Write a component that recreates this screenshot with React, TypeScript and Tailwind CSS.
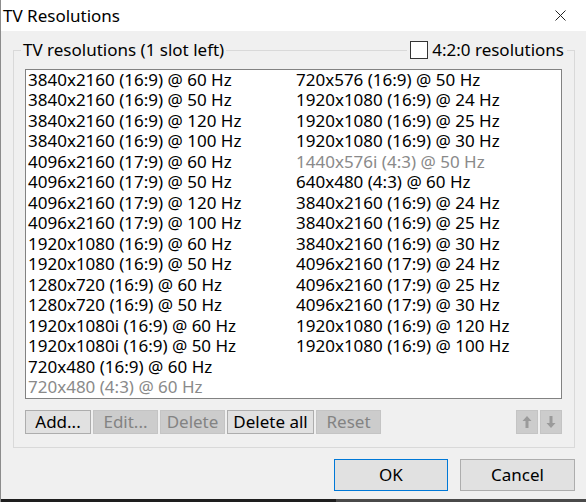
import React from "react";

const left = [
  "3840x2160 (16:9) @ 60 Hz",
  "3840x2160 (16:9) @ 50 Hz",
  "3840x2160 (16:9) @ 120 Hz",
  "3840x2160 (16:9) @ 100 Hz",
  "4096x2160 (17:9) @ 60 Hz",
  "4096x2160 (17:9) @ 50 Hz",
  "4096x2160 (17:9) @ 120 Hz",
  "4096x2160 (17:9) @ 100 Hz",
  "1920x1080 (16:9) @ 60 Hz",
  "1920x1080 (16:9) @ 50 Hz",
  "1280x720 (16:9) @ 60 Hz",
  "1280x720 (16:9) @ 50 Hz",
  "1920x1080i (16:9) @ 60 Hz",
  "1920x1080i (16:9) @ 50 Hz",
  "720x480 (16:9) @ 60 Hz",
  "720x480 (4:3) @ 60 Hz",
];

const right = [
  "720x576 (16:9) @ 50 Hz",
  "1920x1080 (16:9) @ 24 Hz",
  "1920x1080 (16:9) @ 25 Hz",
  "1920x1080 (16:9) @ 30 Hz",
  "1440x576i (4:3) @ 50 Hz",
  "640x480 (4:3) @ 60 Hz",
  "3840x2160 (16:9) @ 24 Hz",
  "3840x2160 (16:9) @ 25 Hz",
  "3840x2160 (16:9) @ 30 Hz",
  "4096x2160 (17:9) @ 24 Hz",
  "4096x2160 (17:9) @ 25 Hz",
  "4096x2160 (17:9) @ 30 Hz",
  "1920x1080 (16:9) @ 120 Hz",
  "1920x1080 (16:9) @ 100 Hz",
];

// greyed-out entries
const disabled = ["1440x576i (4:3) @ 50 Hz", "720x480 (4:3) @ 60 Hz"];

function Item({ text }: { text: string }) {
  return (
    <div
      className={`h-[20.47px] leading-[20.47px] whitespace-nowrap ${
        disabled.includes(text) ? "text-[#8a8a8a]" : "text-black"
      }`}
    >
      {text}
    </div>
  );
}

function Btn({ label, w, enabled }: { label: string; w: string; enabled?: boolean }) {
  return (
    <div
      className={`${w} h-[24px] flex items-center justify-center border ${
        enabled
          ? "bg-[#e1e1e1] border-[#adadad] text-black"
          : "bg-[#cccccc] border-[#c4c4c4] text-[#838383]"
      }`}
    >
      {label}
    </div>
  );
}

function Arrow({ up }: { up?: boolean }) {
  return (
    <div className="w-[22px] h-[24px] bg-[#cccccc] border border-[#c4c4c4] flex items-center justify-center">
      <svg width="10" height="14" viewBox="0 0 10 14" className={up ? "" : "rotate-180"}>
        <path d="M5 1 L9.5 6 H6.5 V13 H3.5 V6 H0.5 Z" fill="#9a9a9a" />
      </svg>
    </div>
  );
}

export default function App() {
  return (
    <div
      className="w-[586px] h-[502px] bg-[#f0f0f0] flex flex-col border-l border-[#8c8c8c] overflow-hidden text-[17px]"
      style={{ fontFamily: '"Noto Sans", "Open Sans", sans-serif' }}
    >
      {/* Title bar */}
      <div className="h-[31px] bg-white flex items-center justify-between pl-[2px] pr-[20px]">
        <span className="text-black">TV Resolutions</span>
        <svg width="11" height="11" viewBox="0 0 11 11">
          <path d="M0.5 0.5 L10.5 10.5 M10.5 0.5 L0.5 10.5" stroke="#222" strokeWidth="1" />
        </svg>
      </div>

      {/* Group box */}
      <div className="ml-[12px] mt-[19px] w-[562px] h-[398px] border border-[#d9d9d9] flex flex-col">
        <div className="-mt-[12px] h-[22px] flex items-center justify-between pl-[7px] pr-[7px]">
          <span className="bg-[#f0f0f0] px-[2px] leading-[22px]">TV resolutions (1 slot left)</span>
          <span className="bg-[#f0f0f0] flex items-center gap-[4px] pl-[3px] pr-[3px] leading-[22px]">
            <span className="w-[18px] h-[18px] bg-white border border-[#333]" />
            4:2:0 resolutions
          </span>
        </div>

        {/* List box */}
        <div className="ml-[11px] mt-[8px] w-[537px] h-[330px] bg-white border border-[#828282] flex pl-[2px]">
          <div className="w-[268px]">
            {left.map((t) => (
              <Item key={t} text={t} />
            ))}
          </div>
          <div>
            {right.map((t) => (
              <Item key={t} text={t} />
            ))}
          </div>
        </div>

        {/* Buttons */}
        <div className="ml-[11px] mt-[11px] w-[537px] flex items-center">
          <div className="flex gap-[2px]">
            <Btn label="Add..." w="w-[66px]" enabled />
            <Btn label="Edit..." w="w-[65px]" />
            <Btn label="Delete" w="w-[65px]" />
            <Btn label="Delete all" w="w-[87px]" enabled />
            <Btn label="Reset" w="w-[65px]" />
          </div>
          <div className="ml-auto flex gap-[2px]">
            <Arrow up />
            <Arrow />
          </div>
        </div>
      </div>

      {/* Dialog buttons */}
      <div className="mt-[11px] w-[574px] flex justify-end gap-[12px]">
        <div className="w-[114px] h-[32px] bg-[#e1e1e1] border border-[#0078d7] flex items-center justify-center">
          OK
        </div>
        <div className="w-[115px] h-[32px] bg-[#e1e1e1] border border-[#adadad] flex items-center justify-center">
          Cancel
        </div>
      </div>

      <div className="mt-auto h-[3px] flex">
        <div className="w-[335px] bg-[#1e1e1e]" />
        <div className="flex-1 bg-[#4a4a4a]" />
      </div>
    </div>
  );
}
